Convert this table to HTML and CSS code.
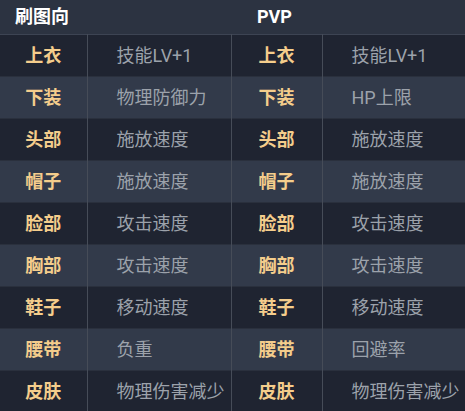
FILE: index.html
```html
<!DOCTYPE html>
<html lang="zh">
<head>
<meta charset="utf-8">
<link rel="stylesheet" href="styles.css">
</head>
<body>
<table class="tbl">
  <colgroup>
    <col class="c1"><col class="c2"><col class="c3"><col class="c4">
  </colgroup>
  <thead>
    <tr class="head">
      <th colspan="2" class="h-left">刷图向</th>
      <th colspan="2" class="h-right">PVP</th>
    </tr>
  </thead>
  <tbody>
    <tr class="dark"><td class="lbl">上衣</td><td class="val">技能LV+1</td><td class="lbl">上衣</td><td class="val">技能LV+1</td></tr>
    <tr class="light"><td class="lbl">下装</td><td class="val">物理防御力</td><td class="lbl">下装</td><td class="val">HP上限</td></tr>
    <tr class="dark"><td class="lbl">头部</td><td class="val">施放速度</td><td class="lbl">头部</td><td class="val">施放速度</td></tr>
    <tr class="light"><td class="lbl">帽子</td><td class="val">施放速度</td><td class="lbl">帽子</td><td class="val">施放速度</td></tr>
    <tr class="dark"><td class="lbl">脸部</td><td class="val">攻击速度</td><td class="lbl">脸部</td><td class="val">攻击速度</td></tr>
    <tr class="light"><td class="lbl">胸部</td><td class="val">攻击速度</td><td class="lbl">胸部</td><td class="val">攻击速度</td></tr>
    <tr class="dark"><td class="lbl">鞋子</td><td class="val">移动速度</td><td class="lbl">鞋子</td><td class="val">移动速度</td></tr>
    <tr class="light"><td class="lbl">腰带</td><td class="val">负重</td><td class="lbl">腰带</td><td class="val">回避率</td></tr>
    <tr class="dark"><td class="lbl">皮肤</td><td class="val">物理伤害减少</td><td class="lbl">皮肤</td><td class="val">物理伤害减少</td></tr>
  </tbody>
</table>
</body>
</html>
```

FILE: styles.css
```css
html, body {
  margin: 0;
  padding: 0;
  background: #1e2330;
  overflow: hidden;
}
body {
  width: 465px;
  height: 411px;
  font-family: Roboto, "Noto Sans CJK SC", sans-serif;
}
.tbl {
  width: 465px;
  border-collapse: collapse;
  table-layout: fixed;
}
.c1 { width: 87px; }
.c2 { width: 144px; }
.c3 { width: 91px; }
.c4 { width: 143px; }
.head {
  background: #2c3341;
  height: 34px;
  border-bottom: 1px solid #3d4453;
}
.head th {
  color: #ffffff;
  font-size: 18px;
  font-weight: 700;
  text-align: left;
  padding: 0;
  line-height: 34px;
  vertical-align: middle;
}
.h-left { padding-left: 15px !important; }
.h-right { padding-left: 26px !important; }
tbody tr {
  height: 42px;
  border-bottom: 1px solid #2a303d;
}
.dark { background: #1f2431; }
.light { background: #323a4a; }
td {
  padding: 0;
  vertical-align: middle;
  border-left: 1px solid #464c58;
  line-height: 22px;
}
td:first-child { border-left: none; }
.lbl {
  text-align: center;
  color: #f4cd8c;
  font-weight: 700;
  font-size: 18px;
}
.val {
  text-align: left;
  padding-left: 29px;
  color: #9ca2ab;
  font-size: 18px;
  white-space: nowrap;
}
```
